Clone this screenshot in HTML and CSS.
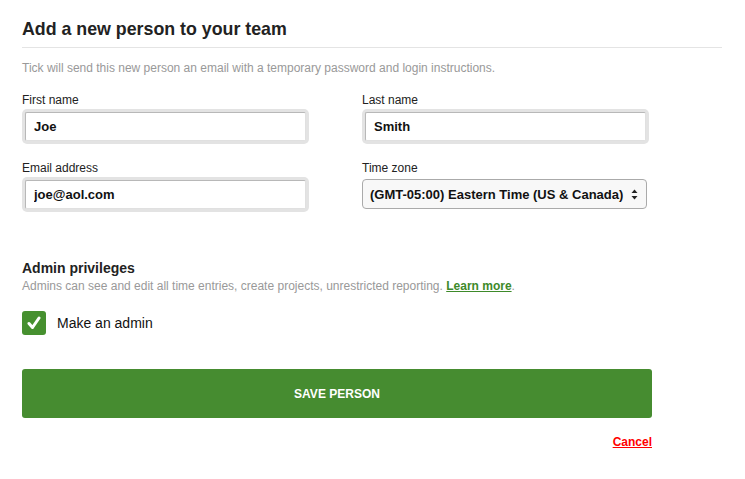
FILE: index.html
```html
<!DOCTYPE html>
<html lang="en">
	<head>
		<meta charset="UTF-8" />
		<meta name="viewport" content="width=device-width, initial-scale=1.0" />
		<link rel="stylesheet" href="styles.css">
	</head>
	<body>
		<div class="panel">
			<h1 class="panel-title">Add a new person to your team</h1>
			<p class="panel-note">Tick will send this new person an email with a temporary password and login instructions.</p>

			<form class="person-form">
				<div class="field-grid">
					<div class="field">
						<label>First name</label>
						<div class="input-ring"><input type="text" value="Joe" /></div>
					</div>
					<div class="field">
						<label>Last name</label>
						<div class="input-ring"><input type="text" value="Smith" /></div>
					</div>
					<div class="field">
						<label>Email address</label>
						<div class="input-ring"><input type="text" value="joe@aol.com" /></div>
					</div>
					<div class="field">
						<label>Time zone</label>
						<div class="select-box">
							<span>(GMT-05:00) Eastern Time (US &amp; Canada)</span>
							<svg class="select-arrows" width="7" height="11" viewBox="0 0 7 11">
								<path d="M3.5 0.5 L6.5 4 L0.5 4 Z" fill="#222" />
								<path d="M3.5 10.5 L6.5 7 L0.5 7 Z" fill="#222" />
							</svg>
						</div>
					</div>
				</div>

				<div class="admin-block">
					<h2>Admin privileges</h2>
					<p>Admins can see and edit all time entries, create projects, unrestricted reporting. <a href="#">Learn more</a>.</p>
					<label class="check-row">
						<span class="check-box">
							<svg width="14" height="14" viewBox="0 0 14 14">
								<path d="M2 7.5 L5.5 11.5 L12 2" fill="none" stroke="#fff" stroke-width="3" stroke-linecap="round" stroke-linejoin="round" />
							</svg>
						</span>
						Make an admin
					</label>
				</div>

				<button type="button" class="save-btn">SAVE PERSON</button>
				<div class="cancel-row"><a href="#">Cancel</a></div>
			</form>
		</div>
	</body>
</html>
```

FILE: styles.css
```css
body {
	margin: 0;
	font-family: "Liberation Sans", Arial, sans-serif;
	color: #222;
	background: #fff;
}

.panel {
	width: 700px;
	padding: 21px 0 0 22px;
}

.panel-title {
	font-size: 17.8px;
	font-weight: bold;
	margin: 0;
	padding-bottom: 9px;
	border-bottom: 1px solid #e4e4e4;
	line-height: 17px;
}

.panel-note {
	font-size: 12px;
	color: #999;
	margin: 13px 0 0;
	line-height: 14px;
}

.person-form {
	width: 630px;
	margin-top: 18px;
}

.field-grid {
	display: grid;
	grid-template-columns: 287px 287px;
	column-gap: 53px;
	row-gap: 17px;
}

.field label {
	display: block;
	font-size: 12px;
	line-height: 14px;
	margin-bottom: 2px;
}

.input-ring {
	padding: 3px;
	background: #e3e3e3;
	border-radius: 5px;
}

.input-ring input {
	display: block;
	box-sizing: border-box;
	width: 100%;
	height: 29px;
	margin: 0;
	border: 1px solid #b8b8b8;
	border-right-color: #e0e0e0;
	border-bottom-color: #e0e0e0;
	border-radius: 2px;
	padding: 0 8px;
	font-family: "Liberation Sans", Arial, sans-serif;
	font-size: 13px;
	font-weight: bold;
	color: #111;
	background: #fff;
}

.select-box {
	box-sizing: border-box;
	height: 30px;
	margin-top: 4px;
	width: 285px;
	border: 1px solid #aaa;
	border-radius: 4px;
	background: #f8f8f8;
	display: flex;
	align-items: center;
	justify-content: space-between;
	padding: 0 8px 0 7px;
	font-size: 13px;
	font-weight: bold;
	color: #111;
}

.admin-block {
	margin-top: 48px;
}

.admin-block h2 {
	font-size: 14px;
	margin: 0;
	line-height: 16px;
}

.admin-block p {
	font-size: 12px;
	color: #999;
	margin: 3px 0 0;
	line-height: 14px;
}

.admin-block p a {
	color: #3e8a2a;
	font-weight: bold;
}

.check-row {
	display: flex;
	align-items: center;
	gap: 11px;
	margin-top: 18px;
	font-size: 14px;
	color: #111;
}

.check-box {
	width: 24px;
	height: 24px;
	border-radius: 3px;
	background: #46902f;
	display: flex;
	align-items: center;
	justify-content: center;
}

.save-btn {
	display: block;
	width: 630px;
	height: 49px;
	margin-top: 34px;
	border: none;
	border-radius: 3px;
	background: #468c30;
	color: #fff;
	font-family: "Liberation Sans", Arial, sans-serif;
	font-size: 12px;
	font-weight: bold;
}

.cancel-row {
	text-align: right;
	margin-top: 17px;
	font-size: 12px;
}

.cancel-row a {
	color: #f00;
	font-weight: bold;
}
```
